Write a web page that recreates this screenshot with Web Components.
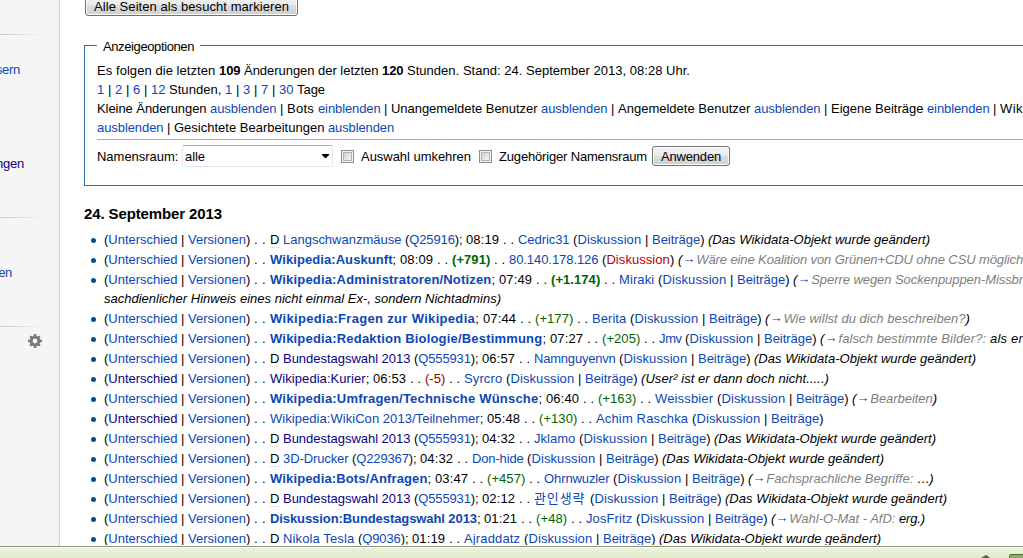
<!DOCTYPE html>
<html lang="de">
<head>
<meta charset="utf-8">
<title>Beobachtungsliste</title>
<style>
html,body{margin:0;padding:0;height:100%;overflow:hidden;background:#fff}
body{font:13px/19px "Liberation Sans","Noto Sans CJK KR",sans-serif;color:#000}
</style>
</head>
<body>
<wiki-window></wiki-window>
<script>
const LINK = '#0c47b4', VISITED = '#0b0080';

/* A single line of text runs; each run starts at its own tab stop. */
class TextLine extends HTMLElement {
  constructor() {
    super();
    this.attachShadow({mode: 'open'});
  }
  set runs(list) {
    this.shadowRoot.innerHTML = `<style>
      :host{display:flex;white-space:pre;height:var(--line,19px);line-height:var(--line,19px)}
      .run{flex:none}
      .run>span{display:inline-block;white-space:pre}
      .l{color:${LINK}} .v{color:${VISITED}} .n{color:#ba0000}
      .g{color:#006400} .r{color:#8b0000} .c{color:#808080}
      .arrow{display:inline-block;width:14px;height:17px;line-height:17px;vertical-align:top}
      abbr{display:inline-block;height:17px;border-bottom:1px dotted #ccc}
    </style>`;
    const fits = [];
    for (let i = 0; i < list.length - 1; i++) {
      const width = list[i + 1][0] - list[i][0];
      const run = document.createElement('span');
      run.className = 'run';
      run.style.width = width + 'px';
      run.innerHTML = `<span>${list[i][1]}</span>`;
      this.shadowRoot.append(run);
      fits.push([run.firstChild, width]);
    }
    for (const [el, width] of fits) {
      const natural = el.getBoundingClientRect().width;
      el.style.letterSpacing = (width - natural) / [...el.textContent].length + 'px';
    }
  }
}
customElements.define('text-line', TextLine);

class PushButton extends HTMLElement {
  constructor() {
    super();
    this.attachShadow({mode: 'open'}).innerHTML = `<style>
      :host{display:block;box-sizing:border-box;border:1px solid #707070;border-radius:3px;
        background:linear-gradient(#f2f2f2,#ebebeb 50%,#ddd 50%,#cfcfcf);box-shadow:inset 0 0 0 1px #fcfcfc}
    </style><slot></slot>`;
  }
}
customElements.define('push-button', PushButton);

class CheckBox extends HTMLElement {
  constructor() {
    super();
    this.attachShadow({mode: 'open'}).innerHTML = `<style>
      :host{display:block;box-sizing:border-box;width:13px;height:13px;border:1px solid #8e8f8f;background:#f4f4f4;padding:1px}
      i{display:block;box-sizing:border-box;width:9px;height:9px;border:1px solid #aeb3b9;background:linear-gradient(135deg,#cbcfd5,#f6f6f6)}
    </style><i></i>`;
  }
}
customElements.define('check-box', CheckBox);

class SideBar extends HTMLElement {
  constructor() {
    super();
    this.attachShadow({mode: 'open'}).innerHTML = `<style>
      :host{display:block;box-sizing:border-box;width:60px;flex:none;background:#f5f5f5;border-right:1px solid #a7d7f9;overflow:hidden}
      hr{border:0;margin:0;height:1px;width:44px;background:linear-gradient(90deg,#c8c8c8,#f5f5f5)}
      p{margin:0;display:flex;justify-content:flex-end;color:${LINK}}
      svg{display:block;margin:7px 0 0 28px}
    </style>
    <hr style="margin-top:34px">
    <p style="width:20px;margin-top:25px;letter-spacing:-.3px">sern</p>
    <p style="width:24px;margin-top:75px;letter-spacing:-.2px;color:${VISITED}">ngen</p>
    <hr style="margin-top:44px">
    <p style="width:12px;margin-top:45px;letter-spacing:-.3px">en</p>
    <hr style="margin-top:44px">
    <svg width="14" height="14" viewBox="-7 -7 14 14"><g fill="#7b7b7b">
      <path fill-rule="evenodd" d="M0-5.2A5.2 5.2 0 1 1 0 5.2A5.2 5.2 0 1 1 0-5.2ZM0-2.4A2.4 2.4 0 1 0 0 2.4A2.4 2.4 0 1 0 0-2.4Z"/>
      <path d="M-1.6-4.5L-1.2-7H1.2L1.6-4.5ZM-1.6 4.5L-1.2 7H1.2L1.6 4.5ZM-4.5-1.6L-7-1.2V1.2L-4.5 1.6ZM4.5-1.6L7-1.2V1.2L4.5 1.6Z"/>
      <path transform="rotate(45)" d="M-1.5-4.5L-1.2-6.7H1.2L1.5-4.5ZM-1.5 4.5L-1.2 6.7H1.2L1.5 4.5ZM-4.5-1.5L-6.7-1.2V1.2L-4.5 1.5ZM4.5-1.5L6.7-1.2V1.2L4.5 1.5Z"/>
    </g></svg>`;
  }
}
customElements.define('side-bar', SideBar);

const l = t => `<span class="l">${t}</span>`;
const v = t => `<span class="v">${t}</span>`;

class DisplayOptions extends HTMLElement {
  constructor() {
    super();
    this.attachShadow({mode: 'open'}).innerHTML = `<style>
      :host{display:block}
      fieldset{box-sizing:border-box;width:1000px;height:149px;margin:0;padding:0 0 0 12px;border:1px solid #2f6fab;min-width:0}
      legend{padding:0 6px;margin:0;width:91px;height:17px}
      .lines{margin-top:7px}
      .rule{height:1px;background:#aaa;margin-top:2px}
      .form{display:flex;align-items:center;height:20px;margin-top:6px}
      .select{box-sizing:border-box;display:flex;align-items:center;justify-content:space-between;flex:none;
        width:151px;height:22px;border:1px solid #e3e9ef;border-top-color:#abadb3;border-radius:2px;padding:0 3px 0 2px;margin-right:8px}
      push-button{width:78px;height:20px;padding-left:8px}
      check-box{flex:none}
    </style>
    <fieldset><legend><text-line></text-line></legend>
      <div class="lines"><text-line></text-line><text-line></text-line><text-line></text-line><text-line></text-line></div>
      <div class="rule"></div>
      <div class="form">
        <text-line></text-line>
        <div class="select"><text-line></text-line><svg width="7" height="4" viewBox="0 0 7 4"><path d="M0 0H7V1L4 4H3L0 1Z"/></svg></div>
        <check-box></check-box><text-line style="margin:0 8px 0 7px"></text-line>
        <check-box></check-box><text-line style="margin:0 5px 0 7px"></text-line>
        <push-button><text-line></text-line></push-button>
      </div>
    </fieldset>`;
  }
  connectedCallback() {
    const lines = [
      [[103,'Anzeigeoptionen'],[194]],
      [[97,'Es folgen die letzten '],[219,'<b>109 </b>'],[244,'Änderungen der letzten '],[382,'<b>120 </b>'],[407,'Stunden. Stand: 24. September 2013, 08:28 Uhr.'],[690]],
      [[97,l('1 ')],[108,'| '],[115,l('2 ')],[126,'| '],[133,l('6 ')],[144,'| '],[151,l('12 ')],[169,'Stunden, '],[225,l('1 ')],[236,'| '],[243,l('3 ')],[254,'| '],[261,l('7 ')],[272,'| '],[279,l('30 ')],[297,'Tage'],[325]],
      [[97,'Kleine Änderungen '],[210,l('ausblenden ')],[280,'| '],[287,'Bots '],[318,l('einblenden ')],[384,'| '],[391,'Unangemeldete Benutzer '],[541,l('ausblenden ')],[611,'| '],[618,'Angemeldete Benutzer '],[754,l('ausblenden ')],[824,'| '],[831,'Eigene Beiträge '],[927,l('einblenden ')],[993,'| '],[1000,'Wik'],[1023]],
      [[97,l('ausblenden ')],[167,'| '],[174,'Gesichtete Bearbeitungen '],[328,l('ausblenden')],[394]],
      [[97,'Namensraum: '],[182]],
      [[185,'alle'],[205]],
      [[361,'Auswahl umkehren'],[471]],
      [[499,'Zugehöriger Namensraum'],[647]],
      [[661,'Anwenden'],[721]]
    ];
    this.shadowRoot.querySelectorAll('text-line').forEach((el, i) => el.runs = lines[i]);
  }
}
customElements.define('display-options', DisplayOptions);

class ChangeEntry extends HTMLElement {
  constructor() {
    super();
    this.attachShadow({mode: 'open'}).innerHTML = `<style>
      :host{display:grid;grid-template-columns:20px auto;margin-bottom:1px}
      i{width:5px;height:5px;border-radius:50%;background:#00528c;margin:8px 0 0 7px}
    </style><i></i><div></div>`;
  }
  set lines(list) {
    for (const runs of list) {
      const line = document.createElement('text-line');
      this.shadowRoot.querySelector('div').append(line);
      line.runs = runs;
    }
  }
}
customElements.define('change-entry', ChangeEntry);

const DOTS = '. . ';
const prefix = seen => [[104, '(' + (seen ? v : l)('Unterschied ')],[181,'| '],[188,l('Versionen') + ') '],[254,DOTS]];
const talk = x => [[x, '(' + l('Diskussion ')],[x + 72,'| '],[x + 79,l('Beiträge') + ') ']];
const page = (title, time, delta, after, user, seen) => [
  ...prefix(seen),[270,title],[time[0],time[1]],[time[0] + 37,DOTS],
  ...(delta ? [[time[0] + 52,delta],[after,DOTS]] : []),...user];
const article = (title, qx, q, tx, time, ux, user, dx) => [
  ...prefix(),[270,'<abbr>D</abbr> '],[283,title],[qx,`(${l(q)}); `],[tx,time],[tx + 37,DOTS],
  [ux,l(user)],...talk(dx),[dx + 135,'<i>(Das Wikidata-Objekt wurde geändert)</i>'],[dx + 357]];
const strong = t => `<b class="l">${t}</b>; `;
const plus = t => `<span class="g">(${t}) </span>`;
const section = (t, rest = '') => `<i>(<span class="l arrow">→</span><span class="c">${t}</span>${rest}</i>`;

const CHANGES = [
  [article(l('Langschwanzmäuse '),405,'Q25916',466,'08:19 ',518,'Cedric31 ',573)],
  [page(strong('Wikipedia:Auskunft'),[400,'08:09 '],`<b>${plus('+791')}</b>`,494,
    [[509,l('80.140.178.126 ')],[602,'(<span class="n">Diskussion</span>) '],[678,section('Wäre eine Koalition von Grünen+CDU ohne CSU möglich')],[1023]])],
  [page(strong('Wikipedia:Administratoren/Notizen'),[499,'07:49 '],`<b>${plus('+1.174')}</b>`,604,
    [[619,l('Miraki ')],...talk(658),[793,section('Sperre wegen Sockenpuppen-Missbr')],[1023]]),
   [[104,'<i>sachdienlicher Hinweis eines nicht einmal Ex-, sondern Nichtadmins)</i>'],[501]]],
  [page(strong('Wikipedia:Fragen zur Wikipedia'),[483,'07:44 '],plus('+177'),577,
    [[592,l('Berita ')],...talk(630),[765,section('Wie willst du dich beschreiben?',')')],[970]])],
  [page(strong('Wikipedia:Redaktion Biologie/Bestimmung'),[550,'07:27 '],plus('+205'),644,
    [[659,l('Jmv ')],...talk(685),[820,section('falsch bestimmte Bilder?: ')],[990,'<i>als er</i>'],[1023]])],
  [article(v('Bundestagswahl 2013 '),414,'Q555931',482,'06:57 ',534,'Namnguyenvn ',619)],
  [page(v('Wikipedia:Kurier') + '; ',[373,'06:53 '],'<span class="r">(-5) </span>',449,
    [[464,l('Syrcro ')],...talk(506),[641,'<i>(User² ist er dann doch nicht.....)</i>'],[829]],true)],
  [page(strong('Wikipedia:Umfragen/Technische Wünsche'),[546,'06:40 '],plus('+163'),640,
    [[655,l('Weissbier ')],...talk(717),[852,section('Bearbeiten',')')],[937]])],
  [page(l('Wikipedia:WikiCon 2013/Teilnehmer') + '; ',[487,'05:48 '],plus('+130'),581,
    [[596,l('Achim Raschka ')],...talk(692),[827]],true)],
  [article(v('Bundestagswahl 2013 '),414,'Q555931',482,'04:32 ',534,'Jklamo ',579)],
  [article(l('3D-Drucker '),352,'Q229367',420,'04:32 ',472,'Don-hide ',527)],
  [page(strong('Wikipedia:Bots/Anfragen'),[435,'03:47 '],plus('+457'),529,
    [[544,l('Ohrnwuzler ')],...talk(613),[748,section('Fachsprachliche Begriffe: ')],[917,'<i>…)</i>'],[933]])],
  [article(v('Bundestagswahl 2013 '),414,'Q555931',482,'02:12 ',534,'관인생략 ',590)],
  [page(strong('Diskussion:Bundestagswahl 2013'),[484,'01:21 '],plus('+48'),571,
    [[586,l('JosFritz ')],...talk(636),[771,section('Wahl-O-Mat - AfD: ')],[899,'<i>erg.)</i>'],[925]])],
  [article(l('Nikola Tesla '),358,'Q9036',412,'01:19 ',464,'Ajraddatz ',524)]
];

class WatchList extends HTMLElement {
  constructor() {
    super();
    this.attachShadow({mode: 'open'}).innerHTML = `<style>
      :host{display:block;flex:1;min-width:0;overflow:hidden;padding-left:24px;height:545px}
      push-button{width:213px;height:22px;margin:-6px 0 21px 1px;padding:2px 0 0 8px}
      h4{margin:18px 0 7px;font-size:15px;height:19px}
    </style>
    <push-button><text-line></text-line></push-button>
    <display-options></display-options>
    <h4><text-line></text-line></h4>
    <section></section>`;
  }
  connectedCallback() {
    const root = this.shadowRoot;
    root.querySelector('push-button text-line').runs = [[94,'Alle Seiten als besucht markieren'],[289]];
    root.querySelector('h4 text-line').runs = [[84,'24. September 2013'],[222]];
    for (const lines of CHANGES) {
      const entry = document.createElement('change-entry');
      root.querySelector('section').append(entry);
      entry.lines = lines;
    }
  }
}
customElements.define('watch-list', WatchList);

class StatusBar extends HTMLElement {
  constructor() {
    super();
    this.attachShadow({mode: 'open'}).innerHTML = `<style>
      :host{display:flex;justify-content:flex-end;align-items:flex-end;box-sizing:border-box;height:12px;
        border-top:1px solid #8b9b72;background:linear-gradient(#fbfdf7 0 1px,#ebf2dd 1px,#e0eacb)}
      svg{display:block}
    </style>
    <svg width="43" height="4" viewBox="0 0 43 4"><path d="M1 4L5 1.5Q6 .5 7 1.5L10 4Z" fill="#5b6647"/><path d="M30 4V2Q30 .5 31.5 .5H43V4Z" fill="#8fab68"/><path d="M29.500 4V2Q29.500 .5 31 .5H43" fill="none" stroke="#4e6b30"/></svg>`;
  }
}
customElements.define('status-bar', StatusBar);

class WikiWindow extends HTMLElement {
  constructor() {
    super();
    this.attachShadow({mode: 'open'}).innerHTML = `<style>
      :host{display:flex;flex-direction:column;width:1023px;height:558px;overflow:hidden}
      main{display:flex;height:546px;flex:none}
    </style><main><side-bar></side-bar><watch-list></watch-list></main><status-bar></status-bar>`;
  }
}
customElements.define('wiki-window', WikiWindow);
</script>
</body>
</html>
